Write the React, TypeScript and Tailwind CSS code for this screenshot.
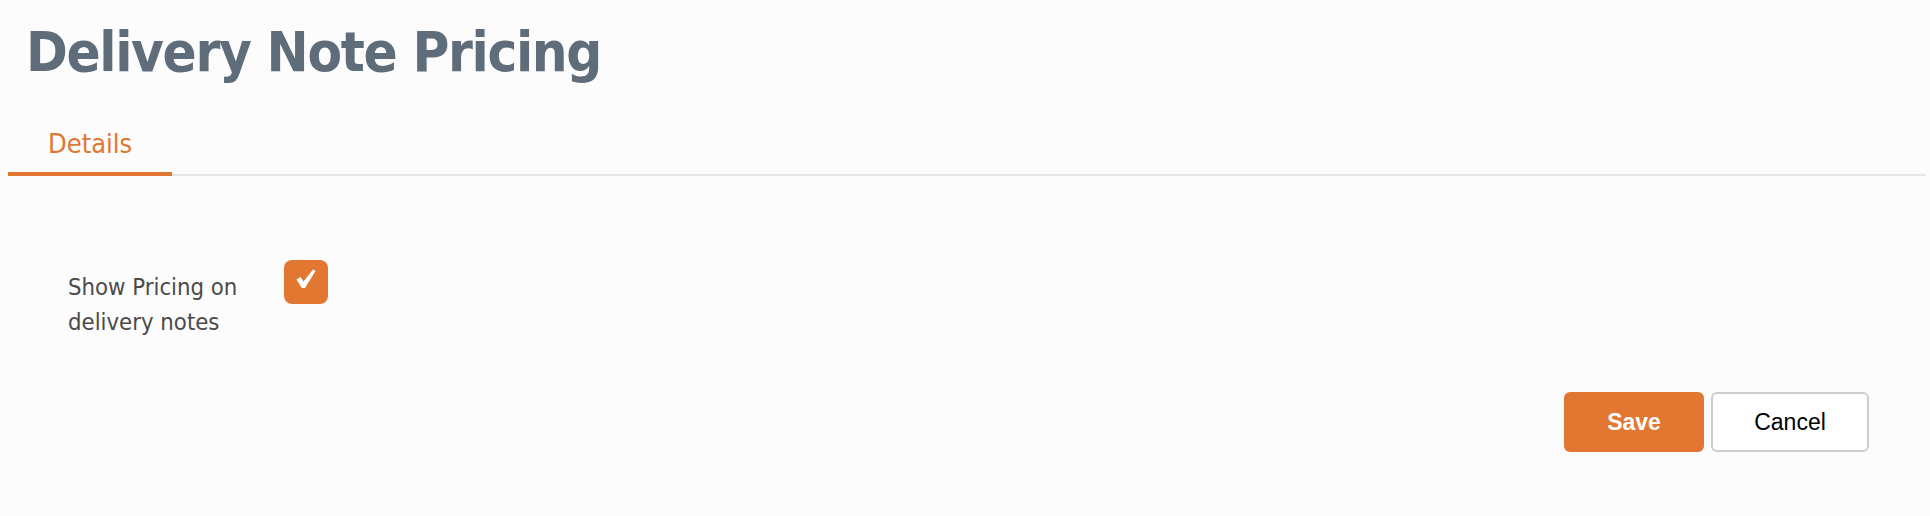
import React from "react";

export default function App() {
  return (
    <div className="w-full h-[516px] bg-[#fcfcfc] overflow-hidden" style={{ fontFamily: '"DejaVu Sans Condensed", "DejaVu Sans", sans-serif' }}>
      <h1 className="pl-[26px] pt-[24px] text-[56px] leading-[56px] font-bold tracking-[-1.35px] text-[#5f6d7a]">
        Delivery Note Pricing
      </h1>
      <div className="mt-[50px] ml-[8px] mr-[4px] flex border-b-2 border-[#e6e6e6]">
        <div className="relative -mb-[2px] px-[40px] pb-[15px] text-[27px] leading-[27px] text-[#e27731] border-b-4 border-[#e27731]">
          Details
        </div>
      </div>
      <div className="mt-[84px] pl-[68px] flex items-start">
        <div className="w-[216px] pt-[10px] text-[23.7px] leading-[35px] text-[#4a4a4a]">
          Show Pricing on delivery notes
        </div>
        <div className="w-[44px] h-[44px] rounded-[8px] bg-[#e27731] flex items-center justify-center">
          <svg width="20" height="20" viewBox="0 0 20 20" className="-mt-[6px]">
            <path d="M0.5 10.5 L4.5 8 L7.5 12.5 L17 0.5 L19.5 2 L9 19 L5.8 19 Z" fill="#ffffff" />
          </svg>
        </div>
      </div>
      <div className="mt-[52px] pr-[61px] flex justify-end gap-[7px]" style={{ fontFamily: '"Liberation Sans", Arial, sans-serif' }}>
        <button className="w-[140px] h-[60px] rounded-[6px] bg-[#e27731] text-white font-bold text-[23px]">Save</button>
        <button className="w-[158px] h-[60px] rounded-[6px] bg-white border-2 border-[#cdcdcd] text-black text-[23px]">Cancel</button>
      </div>
    </div>
  );
}
